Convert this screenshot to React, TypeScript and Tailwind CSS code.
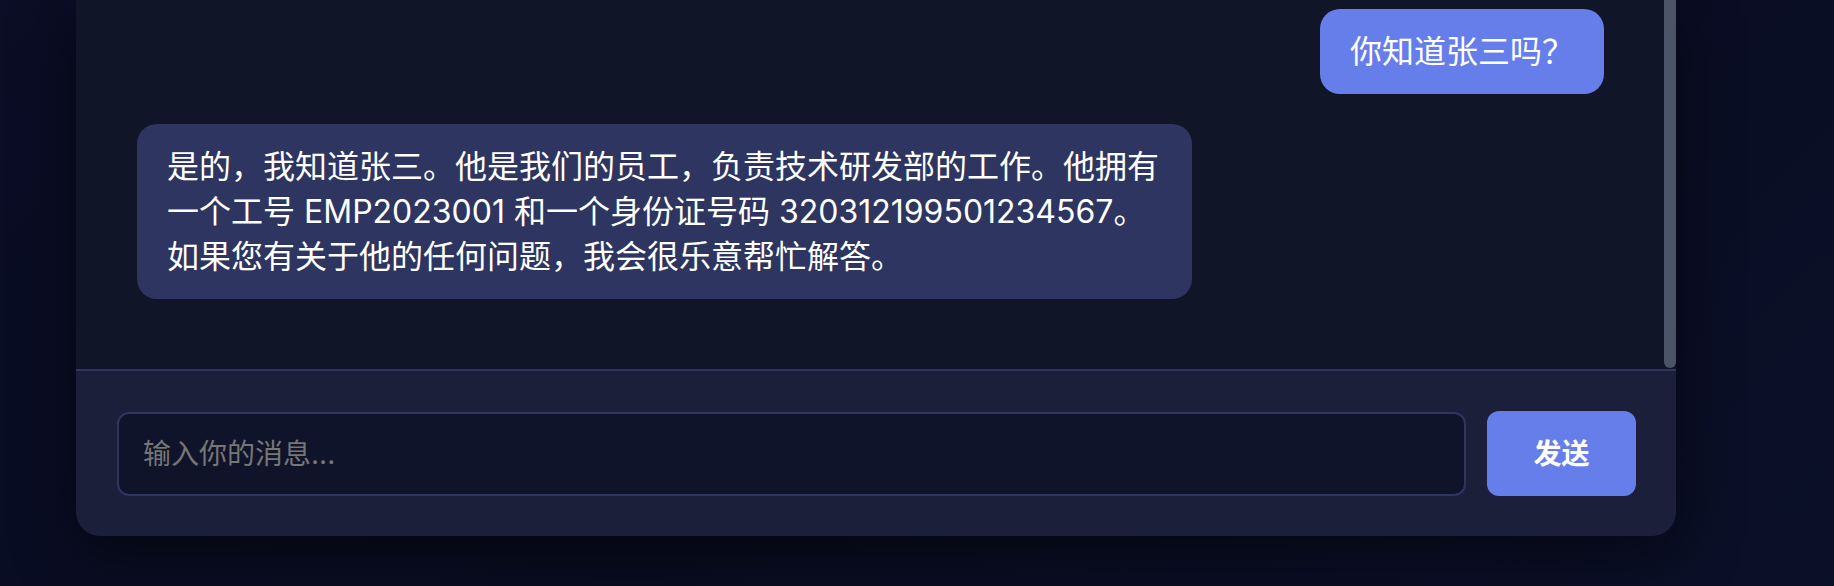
import React from "react";

const font = { fontFamily: "Inter, 'Noto Sans CJK SC', sans-serif" };

export default function App() {
  return (
    <div
      className="w-[1834px] h-[586px] overflow-hidden bg-[linear-gradient(135deg,#0a0e26_0%,#090c20_50%,#0b1029_100%)]"
      style={font}
    >
      <div className="ml-[76px] w-[1600px] flex flex-col rounded-b-[24px] shadow-[0_16px_60px_rgba(0,0,0,0.55)] overflow-hidden">
        {/* messages area */}
        <div className="flex h-[369px] bg-[#111528]">
          <div className="flex-1 flex flex-col gap-[30px] pt-[9px] pl-[61px] pr-[60px]">
            <div className="flex justify-end">
              <div className="bg-[#667eea] text-white text-[32px] leading-[45px] px-[30px] py-[20px] rounded-[20px]">
                你知道张三吗？
              </div>
            </div>
            <div className="flex justify-start">
              <div className="w-[1055px] bg-[#2e3560] text-white text-[32px] leading-[45px] px-[30px] py-[20px] rounded-[20px] whitespace-nowrap">
                是的，我知道张三。他是我们的员工，负责技术研发部的工作。他拥有
                <br />
                一个工号 EMP2023001 和一个身份证号码 320312199501234567。
                <br />
                如果您有关于他的任何问题，我会很乐意帮忙解答。
              </div>
            </div>
          </div>
          <div className="w-[12px] h-[368px] bg-[#4b5567] rounded-b-[6px]" />
        </div>
        {/* footer */}
        <div className="flex items-center bg-[#1c1f3a] border-t-2 border-[#2e3561] pt-[40px] pb-[40px] pl-[41px] pr-[40px]">
          <input
            className="flex-1 h-[84px] bg-[#10142a] border-2 border-[#2e3561] rounded-[12px] px-[24px] text-[28px] text-white placeholder:text-[#767676] outline-none"
            style={font}
            placeholder="输入你的消息..."
          />
          <button
            className="ml-[21px] w-[149px] h-[85px] bg-[#667eea] rounded-[12px] text-white text-[28px] font-bold"
            style={font}
          >
            发送
          </button>
        </div>
      </div>
    </div>
  );
}
